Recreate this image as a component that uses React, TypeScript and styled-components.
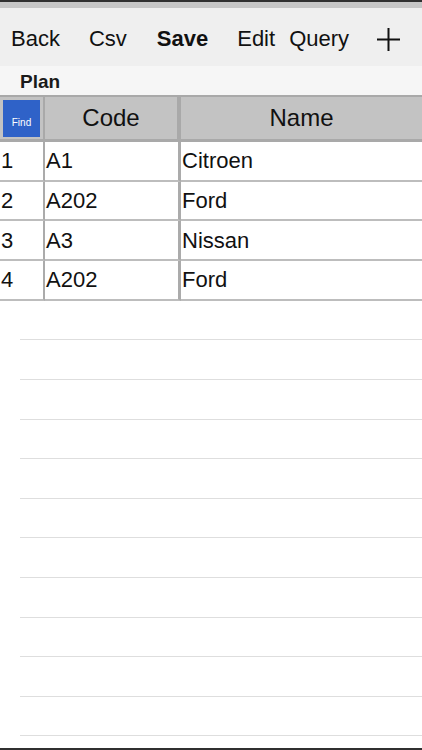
import styled, { createGlobalStyle } from "styled-components";

const GlobalStyle = createGlobalStyle`
  html, body {
    margin: 0;
    padding: 0;
    background: #ffffff;
  }
  * {
    box-sizing: border-box;
  }
`;

const Page = styled.div`
  width: 422px;
  height: 750px;
  display: flex;
  flex-direction: column;
  font-family: "Liberation Sans", Arial, sans-serif;
  color: #111;
  background: #fff;
  overflow: hidden;
`;

const TopEdge = styled.div`
  height: 8px;
  background: #c6c6c6;
  border-top: 2px solid #303030;
  flex-shrink: 0;
`;

const Toolbar = styled.div`
  height: 58px;
  background: #efefef;
  display: flex;
  align-items: center;
  padding: 4px 0 0 11px;
  flex-shrink: 0;
`;

const ToolButton = styled.button<{ $bold?: boolean; $space: number }>`
  background: transparent;
  border: none;
  padding: 0;
  margin-left: ${(p) => p.$space}px;
  font-family: "Liberation Sans", Arial, sans-serif;
  font-size: 22px;
  font-weight: ${(p) => (p.$bold ? 700 : 400)};
  color: #111;
  line-height: 1;
  display: flex;
  align-items: center;
`;

const PlanBar = styled.div`
  height: 29px;
  background: #f6f6f6;
  display: flex;
  align-items: center;
  padding: 3px 0 0 20px;
  font-size: 19px;
  font-weight: 700;
  color: #1a1a1a;
  flex-shrink: 0;
`;

const Grid = styled.div`
  display: grid;
  grid-template-columns: 45px 136px 1fr;
  flex-shrink: 0;
`;

const HeadCell = styled.div<{ $sep?: number }>`
  height: 47px;
  background: #c3c3c3;
  border-top: 2px solid #a9a9a9;
  border-bottom: 3px solid #a9a9a9;
  border-right: ${(p) => p.$sep ?? 0}px solid #a9a9a9;
  display: flex;
  align-items: center;
  justify-content: center;
  font-size: 24px;
  color: #111;
`;

const FindButton = styled.button`
  width: 37px;
  height: 37px;
  margin-right: auto;
  margin-left: 3px;
  background: #2f62c8;
  border: none;
  color: #fff;
  font-family: "Liberation Sans", Arial, sans-serif;
  font-size: 10px;
  padding: 8px 0 0;
`;

const Cell = styled.div<{ $sep?: number }>`
  height: 39.7px;
  background: #fff;
  border-bottom: 2px solid #bdbdbd;
  border-right: ${(p) => p.$sep ?? 0}px solid #ababab;
  display: flex;
  align-items: center;
  padding: 1px 0 0 1px;
  font-size: 22px;
  color: #111;
  white-space: nowrap;
  overflow: hidden;
`;

const Filler = styled.div`
  flex: 1;
  padding-left: 20px;
  overflow: hidden;
`;

const FillerLine = styled.div`
  height: 39.6px;
  border-bottom: 1px solid #dedede;
`;

const BottomEdge = styled.div`
  height: 2px;
  background: #303030;
  flex-shrink: 0;
`;

function PlusIcon() {
  return (
    <svg width="25" height="25" viewBox="0 0 25 25">
      <path d="M12.5 1v23M1 12.5h23" stroke="#111" strokeWidth="2" fill="none" />
    </svg>
  );
}

const rows = [
  { n: "1", code: "A1", name: "Citroen" },
  { n: "2", code: "A202", name: "Ford" },
  { n: "3", code: "A3", name: "Nissan" },
  { n: "4", code: "A202", name: "Ford" },
];

export default function App() {
  return (
    <Page>
      <GlobalStyle />
      <TopEdge />
      <Toolbar>
        <ToolButton $space={0}>Back</ToolButton>
        <ToolButton $space={29}>Csv</ToolButton>
        <ToolButton $space={30} $bold>
          Save
        </ToolButton>
        <ToolButton $space={29}>Edit</ToolButton>
        <ToolButton $space={14}>Query</ToolButton>
        <ToolButton $space={27}>
          <PlusIcon />
        </ToolButton>
      </Toolbar>
      <PlanBar>Plan</PlanBar>
      <Grid>
        <HeadCell $sep={2}>
          <FindButton>Find</FindButton>
        </HeadCell>
        <HeadCell $sep={4}>Code</HeadCell>
        <HeadCell>Name</HeadCell>
        {rows.map((r, i) => (
          <>
            <Cell key={`n${i}`} $sep={2}>
              {r.n}
            </Cell>
            <Cell key={`c${i}`} $sep={3}>
              {r.code}
            </Cell>
            <Cell key={`m${i}`}>{r.name}</Cell>
          </>
        ))}
      </Grid>
      <Filler>
        {Array.from({ length: 12 }).map((_, i) => (
          <FillerLine key={i} />
        ))}
      </Filler>
      <BottomEdge />
    </Page>
  );
}
